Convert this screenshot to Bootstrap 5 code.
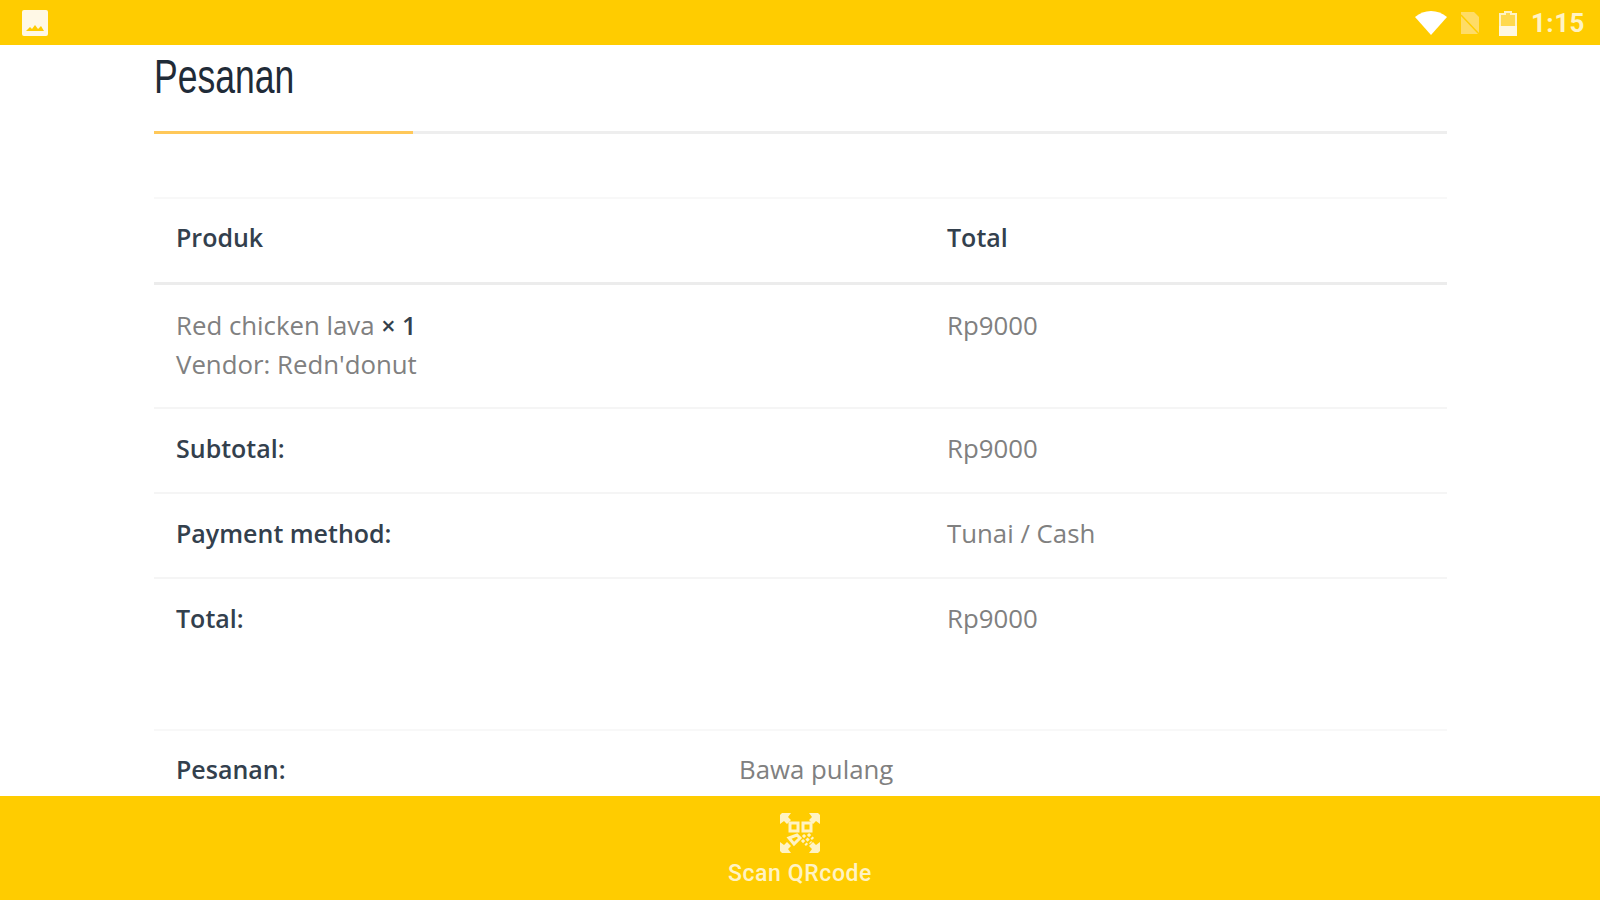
<!DOCTYPE html>
<html lang="id">
<head>
    <meta charset="UTF-8">
    <meta name="viewport" content="width=device-width, initial-scale=1.0">
    <title>Pesanan</title>
    <link href="https://cdn.jsdelivr.net/npm/bootstrap@5.3.0/dist/css/bootstrap.min.css" rel="stylesheet">
    <style>
        html, body { height: 900px; overflow: hidden; }
        body { font-family: "Open Sans", "Liberation Sans", sans-serif; font-size: 25.8px; color: #808080; background: #fff; }
        .status-strip { height: 45px; background: #ffcc00; padding: 0 15px 0 21px; }
        .sim-icon { margin-left: 13px; }
        .battery-icon { margin-left: 18px; }
        .clock { font-family: Roboto, "Liberation Sans", sans-serif; font-size: 26px; font-weight: 700; color: #fff3c4; line-height: 1; letter-spacing: .5px; margin-left: 13px; }
        .page-body { height: 751px; overflow: hidden; padding: 0 153px 0 154px; }
        .page-title { font-family: "Liberation Sans", sans-serif; font-size: 48px; font-weight: 400; color: #1f2b38; margin: 0; height: 89px; padding-top: 6px; line-height: 52px; border-bottom: 3px solid #eeeeee; position: relative; }
        .page-title span { display: inline-block; transform: scaleX(.74); transform-origin: left center; }
        .page-title::after { content: ""; position: absolute; left: 0; bottom: -3px; width: 259px; height: 3px; background: #ffc859; }
        .order-table { width: 100%; table-layout: fixed; margin-top: 63px; border-top: 2px solid #f8f8f8; }
        .order-table td, .order-table th { padding: 0 22px; vertical-align: top; border-bottom: 2px solid #f5f5f5; line-height: 40px; font-weight: 400; }
        .order-table th { color: #33404d; font-weight: 600; font-size: 25px; }
        .head-row th { height: 85px; padding-top: 18px; border-bottom: 3px solid #ececec; }
        .item-row td { height: 125px; padding-top: 21px; line-height: 39px; }
        .order-table .sum-row th, .order-table .sum-row td { height: 85px; padding-top: 19px; }
        .order-table tr:last-child th, .order-table tr:last-child td { border-bottom: 0; }
        .qty { color: #33404d; font-weight: 600; font-size: 25px; }
        .first-col { width: 771px; }
        .extra-table { margin-top: 66px; width: 100%; table-layout: fixed; border-top: 2px solid #f8f8f8; }
        .extra-table th { width: 563px; padding: 18px 22px 0; color: #33404d; font-weight: 600; font-size: 25px; line-height: 40px; }
        .extra-table td { padding: 18px 22px 0; line-height: 40px; }
        .bottom-strip { height: 104px; background: #ffcc00; color: #fff3c4; padding-top: 16px; }
        .scan-label { font-family: Roboto, "Liberation Sans", sans-serif; font-size: 23px; font-weight: 500; line-height: 26px; margin-top: 7px; letter-spacing: .6px; }
    </style>
</head>
<body>

    <div class="status-strip d-flex align-items-center">
        <svg width="28" height="28" viewBox="0 0 28 28"><path fill="#fff8e6" fill-rule="evenodd" d="M3 1h22a2 2 0 0 1 2 2v22a2 2 0 0 1-2 2H3a2 2 0 0 1-2-2V3a2 2 0 0 1 2-2zM5 22h18l-3-5-3 3-3-4-3 4-2-2z"/></svg>
        <div class="ms-auto d-flex align-items-center">
            <svg width="32" height="24" viewBox="0 0 32 24"><path fill="#fff" d="M0 6C9-2 23-2 32 6L16 24z"/></svg>
            <svg class="sim-icon" width="20" height="24" viewBox="0 0 20 24"><path fill="#ffdc66" d="M1 1h13l5 5v17H1z"/><path stroke="#ffcc00" stroke-width="1.5" d="M1 4l18 19"/></svg>
            <svg class="battery-icon" width="20" height="26" viewBox="0 0 20 26"><path fill="#ffd94d" stroke="#fff3c4" stroke-width="2" d="M7 2h6v2h5v21H2V4h5z"/><path fill="#fff8e0" d="M1 16h18v10H1z"/></svg>
            <span class="clock">1:15</span>
        </div>
    </div>

    <div class="page-body">
        <h2 class="page-title"><span>Pesanan</span></h2>

        <table class="order-table">
            <tr class="head-row">
                <th class="first-col">Produk</th>
                <th>Total</th>
            </tr>
            <tr class="item-row">
                <td>Red chicken lava <span class="qty">× 1</span><br>Vendor: Redn'donut</td>
                <td>Rp9000</td>
            </tr>
            <tr class="sum-row">
                <th>Subtotal:</th>
                <td>Rp9000</td>
            </tr>
            <tr class="sum-row">
                <th>Payment method:</th>
                <td>Tunai / Cash</td>
            </tr>
            <tr class="sum-row">
                <th>Total:</th>
                <td>Rp9000</td>
            </tr>
        </table>

        <table class="extra-table">
            <tr>
                <th>Pesanan:</th>
                <td>Bawa pulang</td>
            </tr>
        </table>
    </div>

    <div class="bottom-strip d-flex flex-column align-items-center">
        <svg width="42" height="42" viewBox="0 0 42 42" fill="none" stroke="#fff3c4">
            <path fill="#fff3c4" stroke="none" d="M1 3l2-2h9L9 5l3 3-4 4-3-3-4 3zM41 3l-2-2h-9l3 4-3 3 4 4 3-3 4 3zM1 39l2 2h9l-3-4 3-3-4-4-3 3-4-3zM41 39l-2 2h-9l3-4-3-3 4-4 3 3 4-3z"/>
            <rect x="11" y="11" width="8" height="8" stroke-width="3"/>
            <rect x="24" y="11" width="8" height="8" stroke-width="3"/>
            <path stroke-width="3" d="M10 26l8-3 3 3-6 6z"/>
            <path stroke-width="3" stroke-dasharray="3 2" d="M24 23l8 8M29 22l5 5M23 28l5 5"/>
        </svg>
        <div class="scan-label">Scan QRcode</div>
    </div>

</body>
</html>
